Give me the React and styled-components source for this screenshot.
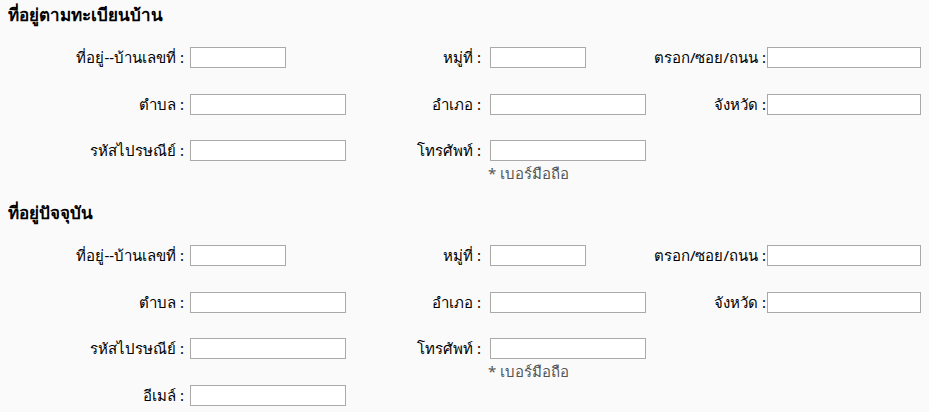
import styled, { createGlobalStyle } from 'styled-components'

const GlobalStyle = createGlobalStyle`
    body {
        margin: 0;
        background: #fafafa;
        font-family: "Noto Sans", "DejaVu Sans", sans-serif;
        font-size: 15px;
        color: #000;
    }
`;

const sections = [
    { title: 'ที่อยู่ตามทะเบียนบ้าน', email: false },
    { title: 'ที่อยู่ปัจจุบัน', email: true },
];

const AddressSection = ({ title, email }) => {
    return (
        <Section>
            <Heading>{title}</Heading>
            <Grid>
                <Label>ที่อยู่--บ้านเลขที่ :</Label>
                <Cell><Input $small /></Cell>
                <Label $col2>หมู่ที่ :</Label>
                <Cell><Input $small /></Cell>
                <Label $col3>ตรอก/ซอย/ถนน :</Label>
                <Cell><Input $full /></Cell>

                <Label>ตำบล :</Label>
                <Cell><Input /></Cell>
                <Label $col2>อำเภอ :</Label>
                <Cell><Input /></Cell>
                <Label $col3>จังหวัด :</Label>
                <Cell><Input $full /></Cell>

                <Label>รหัสไปรษณีย์ :</Label>
                <Cell><Input /></Cell>
                <Label $col2>โทรศัพท์ :</Label>
                <Cell>
                    <Input />
                    <Note>* เบอร์มือถือ</Note>
                </Cell>
                <Cell />
                <Cell />

                {email && (
                    <>
                        <Label>อีเมล์ :</Label>
                        <Cell><Input /></Cell>
                    </>
                )}
            </Grid>
        </Section>
    )
}

const App = () => {
    return (
        <Page>
            <GlobalStyle />
            {sections.map((s) => (
                <AddressSection key={s.title} title={s.title} email={s.email} />
            ))}
        </Page>
    )
}

const Page = styled.div`
    padding: 5px 8px 0 0;
    display: flex;
    flex-direction: column;
    gap: 16.5px;
`;

const Section = styled.section`
    display: flex;
    flex-direction: column;
`;

const Heading = styled.h3`
    margin: 0 0 22px 8px;
    font-size: 17px;
    font-weight: bold;
    line-height: 20px;
    color: #000;
`;

const Grid = styled.div`
    display: grid;
    grid-template-columns: 190px 210px 90px 200px 77px 154px;
    grid-auto-rows: 46.5px;
    align-items: start;
`;

const Label = styled.div`
    display: flex;
    justify-content: flex-end;
    line-height: 21px;
    white-space: nowrap;
    padding-right: ${(p) => (p.$col3 ? '1px' : p.$col2 ? '9px' : '6px')};
`;

const Cell = styled.div`
    display: flex;
    flex-direction: column;
    align-items: flex-start;
`;

const Input = styled.input.attrs({ type: 'text' })`
    box-sizing: border-box;
    width: ${(p) => (p.$small ? '96px' : p.$full ? '154px' : '156px')};
    height: 21px;
    margin: 0;
    padding: 0 3px;
    border: 1px solid #a9a9a9;
    background: #fff;
    outline: none;
`;

const Note = styled.span`
    margin-top: 5px;
    margin-left: -2px;
    line-height: 15px;
    color: #555;
`;

export default App;
